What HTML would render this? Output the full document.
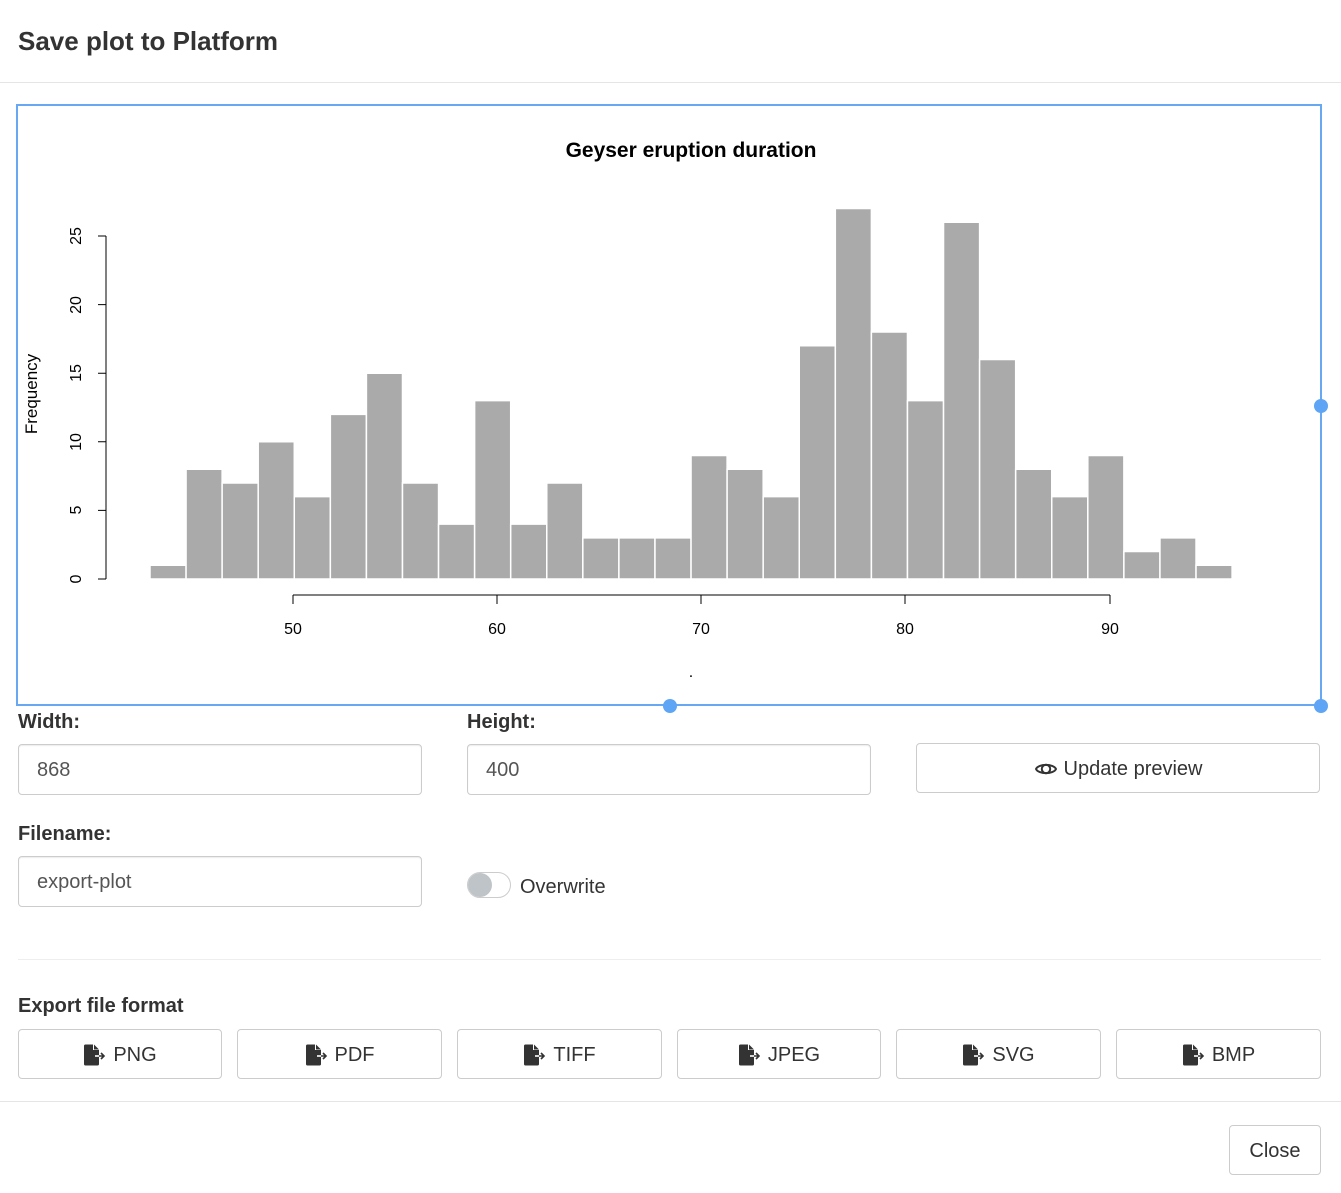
<!DOCTYPE html>
<html><head><meta charset="utf-8"><style>
*{box-sizing:border-box;margin:0;padding:0}
body{width:1341px;height:1193px;background:#fff;font-family:"Liberation Sans",sans-serif;color:#333;position:relative;overflow:hidden}
.a{position:absolute}
.hdr{left:18px;top:26px;font-size:26px;font-weight:bold;color:#333}
.hr{left:0;width:1341px;height:1px;background:#e5e5e5}
.lbl{font-size:20px;font-weight:bold;color:#333}
.inp{border:1px solid #ccc;border-radius:4px;height:51px;font-size:20px;color:#555;padding:14px 18px 0;box-shadow:inset 0 1px 1px rgba(0,0,0,.075)}
.btn{border:1px solid #ccc;border-radius:4px;height:50px;font-size:20px;color:#333;display:flex;align-items:center;justify-content:center;gap:6px;background:#fff;padding-top:2px}
</style></head><body>
<div class="a hdr">Save plot to Platform</div>
<div class="a hr" style="top:82px"></div>

<svg class="a" style="left:0;top:0" width="1341" height="720">
<rect x="17" y="105" width="1304" height="600" fill="none" stroke="#68a8f2" stroke-width="2"/>
<text x="691" y="157" font-family="Liberation Sans" font-weight="bold" font-size="21" text-anchor="middle" fill="#000">Geyser eruption duration</text>
<g transform="translate(150,579) scale(36.07,-13.72)" fill="#aaa" stroke="#fff" stroke-width="1.5">
<rect x="0" width="1" height="1" vector-effect="non-scaling-stroke"/>
<rect x="1" width="1" height="8" vector-effect="non-scaling-stroke"/>
<rect x="2" width="1" height="7" vector-effect="non-scaling-stroke"/>
<rect x="3" width="1" height="10" vector-effect="non-scaling-stroke"/>
<rect x="4" width="1" height="6" vector-effect="non-scaling-stroke"/>
<rect x="5" width="1" height="12" vector-effect="non-scaling-stroke"/>
<rect x="6" width="1" height="15" vector-effect="non-scaling-stroke"/>
<rect x="7" width="1" height="7" vector-effect="non-scaling-stroke"/>
<rect x="8" width="1" height="4" vector-effect="non-scaling-stroke"/>
<rect x="9" width="1" height="13" vector-effect="non-scaling-stroke"/>
<rect x="10" width="1" height="4" vector-effect="non-scaling-stroke"/>
<rect x="11" width="1" height="7" vector-effect="non-scaling-stroke"/>
<rect x="12" width="1" height="3" vector-effect="non-scaling-stroke"/>
<rect x="13" width="1" height="3" vector-effect="non-scaling-stroke"/>
<rect x="14" width="1" height="3" vector-effect="non-scaling-stroke"/>
<rect x="15" width="1" height="9" vector-effect="non-scaling-stroke"/>
<rect x="16" width="1" height="8" vector-effect="non-scaling-stroke"/>
<rect x="17" width="1" height="6" vector-effect="non-scaling-stroke"/>
<rect x="18" width="1" height="17" vector-effect="non-scaling-stroke"/>
<rect x="19" width="1" height="27" vector-effect="non-scaling-stroke"/>
<rect x="20" width="1" height="18" vector-effect="non-scaling-stroke"/>
<rect x="21" width="1" height="13" vector-effect="non-scaling-stroke"/>
<rect x="22" width="1" height="26" vector-effect="non-scaling-stroke"/>
<rect x="23" width="1" height="16" vector-effect="non-scaling-stroke"/>
<rect x="24" width="1" height="8" vector-effect="non-scaling-stroke"/>
<rect x="25" width="1" height="6" vector-effect="non-scaling-stroke"/>
<rect x="26" width="1" height="9" vector-effect="non-scaling-stroke"/>
<rect x="27" width="1" height="2" vector-effect="non-scaling-stroke"/>
<rect x="28" width="1" height="3" vector-effect="non-scaling-stroke"/>
<rect x="29" width="1" height="1" vector-effect="non-scaling-stroke"/>
</g>
<g stroke="#000" stroke-width="1" fill="none">
<path d="M106 236V579 M98 579H106 M98 510.4H106 M98 441.8H106 M98 373.2H106 M98 304.6H106 M98 236H106"/>
<path d="M293 595H1110 M293 595V604 M497 595V604 M701 595V604 M905 595V604 M1110 595V604"/>
</g>
<g font-family="Liberation Sans" font-size="16" fill="#000" text-anchor="middle">
<text transform="translate(81,579) rotate(-90)">0</text>
<text transform="translate(81,510) rotate(-90)">5</text>
<text transform="translate(81,442) rotate(-90)">10</text>
<text transform="translate(81,373) rotate(-90)">15</text>
<text transform="translate(81,305) rotate(-90)">20</text>
<text transform="translate(81,236) rotate(-90)">25</text>
<text transform="translate(37,394) rotate(-90)" font-size="17">Frequency</text>
<text x="293" y="634">50</text><text x="497" y="634">60</text><text x="701" y="634">70</text><text x="905" y="634">80</text><text x="1110" y="634">90</text>
<text x="691" y="677">.</text>
</g>
<g fill="#5ea5f5"><circle cx="670" cy="706" r="7"/><circle cx="1321" cy="406" r="7"/><circle cx="1321" cy="706" r="7"/></g>
</svg>

<div class="a lbl" style="left:18px;top:711px">Width:</div>
<div class="a lbl" style="left:467px;top:711px">Height:</div>
<div class="a inp" style="left:18px;top:744px;width:404px">868</div>
<div class="a inp" style="left:467px;top:744px;width:404px">400</div>
<div class="a btn" style="left:916px;top:743px;width:404px">
<svg width="24" height="20" viewBox="0 0 24 20"><path d="M2 10C4.5 4.5 19.5 4.5 22 10 19.5 15.5 4.5 15.5 2 10Z" fill="none" stroke="#333" stroke-width="2"/><circle cx="12" cy="10" r="4.2" fill="none" stroke="#333" stroke-width="2"/></svg>Update preview</div>
<div class="a lbl" style="left:18px;top:823px">Filename:</div>
<div class="a inp" style="left:18px;top:856px;width:404px">export-plot</div>
<div class="a" style="left:467px;top:872px;width:44px;height:26px;border:1px solid #ccc;border-radius:13px"><div style="position:absolute;left:0;top:0;width:24px;height:24px;border-radius:12px;background:#bfc4c9"></div></div>
<div class="a" style="left:520px;top:876px;font-size:20px">Overwrite</div>
<div class="a" style="left:18px;top:959px;width:1303px;height:1px;background:#eee"></div>
<div class="a lbl" style="left:18px;top:995px">Export file format</div>
<div class="a btn" style="left:18px;top:1029px;width:204px"><svg width="24" height="22" viewBox="0 0 24 22"><path d="M1 2a1.5 1.5 0 0 1 1.5-1.5H10V6h6v14a1.5 1.5 0 0 1-1.5 1.5h-12A1.5 1.5 0 0 1 1 20Z M11 .5l5 5h-5Z" fill="#333"/><path d="M12 12h9M18 9l3 3-3 3" stroke="#333" stroke-width="1.6" fill="none"/><path d="M12 12h4" stroke="#fff" stroke-width="1.6"/></svg>PNG</div>
<div class="a btn" style="left:237px;top:1029px;width:205px"><svg width="24" height="22" viewBox="0 0 24 22"><path d="M1 2a1.5 1.5 0 0 1 1.5-1.5H10V6h6v14a1.5 1.5 0 0 1-1.5 1.5h-12A1.5 1.5 0 0 1 1 20Z M11 .5l5 5h-5Z" fill="#333"/><path d="M12 12h9M18 9l3 3-3 3" stroke="#333" stroke-width="1.6" fill="none"/><path d="M12 12h4" stroke="#fff" stroke-width="1.6"/></svg>PDF</div>
<div class="a btn" style="left:457px;top:1029px;width:205px"><svg width="24" height="22" viewBox="0 0 24 22"><path d="M1 2a1.5 1.5 0 0 1 1.5-1.5H10V6h6v14a1.5 1.5 0 0 1-1.5 1.5h-12A1.5 1.5 0 0 1 1 20Z M11 .5l5 5h-5Z" fill="#333"/><path d="M12 12h9M18 9l3 3-3 3" stroke="#333" stroke-width="1.6" fill="none"/><path d="M12 12h4" stroke="#fff" stroke-width="1.6"/></svg>TIFF</div>
<div class="a btn" style="left:677px;top:1029px;width:204px"><svg width="24" height="22" viewBox="0 0 24 22"><path d="M1 2a1.5 1.5 0 0 1 1.5-1.5H10V6h6v14a1.5 1.5 0 0 1-1.5 1.5h-12A1.5 1.5 0 0 1 1 20Z M11 .5l5 5h-5Z" fill="#333"/><path d="M12 12h9M18 9l3 3-3 3" stroke="#333" stroke-width="1.6" fill="none"/><path d="M12 12h4" stroke="#fff" stroke-width="1.6"/></svg>JPEG</div>
<div class="a btn" style="left:896px;top:1029px;width:205px"><svg width="24" height="22" viewBox="0 0 24 22"><path d="M1 2a1.5 1.5 0 0 1 1.5-1.5H10V6h6v14a1.5 1.5 0 0 1-1.5 1.5h-12A1.5 1.5 0 0 1 1 20Z M11 .5l5 5h-5Z" fill="#333"/><path d="M12 12h9M18 9l3 3-3 3" stroke="#333" stroke-width="1.6" fill="none"/><path d="M12 12h4" stroke="#fff" stroke-width="1.6"/></svg>SVG</div>
<div class="a btn" style="left:1116px;top:1029px;width:205px"><svg width="24" height="22" viewBox="0 0 24 22"><path d="M1 2a1.5 1.5 0 0 1 1.5-1.5H10V6h6v14a1.5 1.5 0 0 1-1.5 1.5h-12A1.5 1.5 0 0 1 1 20Z M11 .5l5 5h-5Z" fill="#333"/><path d="M12 12h9M18 9l3 3-3 3" stroke="#333" stroke-width="1.6" fill="none"/><path d="M12 12h4" stroke="#fff" stroke-width="1.6"/></svg>BMP</div>
<div class="a hr" style="top:1101px"></div>
<div class="a btn" style="left:1229px;top:1125px;width:92px">Close</div>
</body></html>
